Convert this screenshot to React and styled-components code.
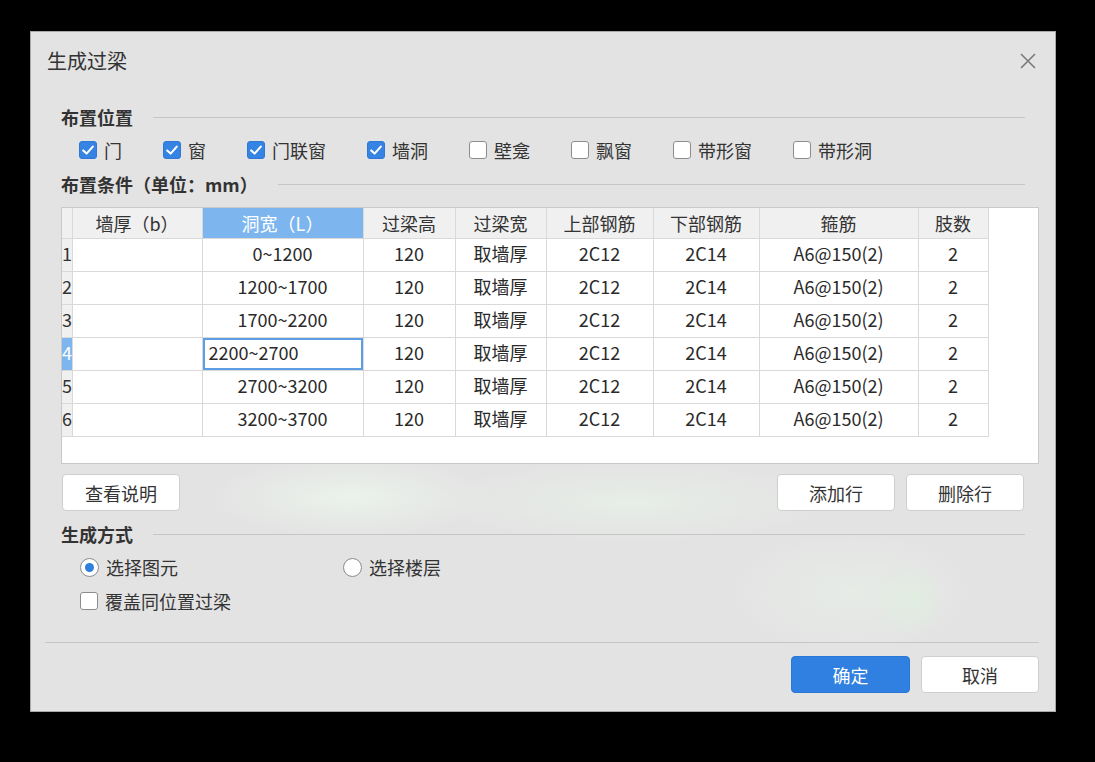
import React from 'react'
import styled, { createGlobalStyle, css } from 'styled-components'

const GlobalStyle = createGlobalStyle`
  html, body {
    margin: 0;
    padding: 0;
    background: #000;
  }
  body {
    font-family: "Noto Sans CJK SC", "Noto Sans", sans-serif;
    color: #333;
  }
  * { box-sizing: border-box; }
`

const positions = [
  { label: '门', checked: true },
  { label: '窗', checked: true },
  { label: '门联窗', checked: true },
  { label: '墙洞', checked: true },
  { label: '壁龛', checked: false },
  { label: '飘窗', checked: false },
  { label: '带形窗', checked: false },
  { label: '带形洞', checked: false },
]

const columns = [
  { title: '墙厚（b）', width: 130 },
  { title: '洞宽（L）', width: 161, selected: true },
  { title: '过梁高', width: 92 },
  { title: '过梁宽', width: 91 },
  { title: '上部钢筋', width: 107 },
  { title: '下部钢筋', width: 106 },
  { title: '箍筋', width: 159 },
  { title: '肢数', width: 70 },
]

const rows = [
  ['', '0~1200', '120', '取墙厚', '2C12', '2C14', 'A6@150(2)', '2'],
  ['', '1200~1700', '120', '取墙厚', '2C12', '2C14', 'A6@150(2)', '2'],
  ['', '1700~2200', '120', '取墙厚', '2C12', '2C14', 'A6@150(2)', '2'],
  ['', '2200~2700', '120', '取墙厚', '2C12', '2C14', 'A6@150(2)', '2'],
  ['', '2700~3200', '120', '取墙厚', '2C12', '2C14', 'A6@150(2)', '2'],
  ['', '3200~3700', '120', '取墙厚', '2C12', '2C14', 'A6@150(2)', '2'],
]

const editRow = 3
const editCol = 1

export default function App() {
  return (
    <>
      <GlobalStyle />
      <Dialog>
        <TitleBar>
          <span>生成过梁</span>
          <CloseIcon width="16" height="16" viewBox="0 0 16 16">
            <path d="M1 1 L15 15 M15 1 L1 15" stroke="#7a7a7a" strokeWidth="1.6" fill="none" />
          </CloseIcon>
        </TitleBar>

        <Content>
          <SectionHeader $top={15}>
            <span>布置位置</span>
            <Rule />
          </SectionHeader>
          <CheckRow>
            {positions.map((p) => (
              <Option key={p.label}>
                <CheckBox checked={p.checked} />
                {p.label}
              </Option>
            ))}
          </CheckRow>

          <SectionHeader $top={8}>
            <span>布置条件（单位：mm）</span>
            <Rule />
          </SectionHeader>

          <TableBox>
            <Grid>
              <colgroup>
                <col style={{ width: 10 }} />
                {columns.map((c) => (
                  <col key={c.title} style={{ width: c.width }} />
                ))}
              </colgroup>
              <thead>
                <tr>
                  <CornerCell />
                  {columns.map((c) => (
                    <HeadCell key={c.title} $selected={c.selected}>{c.title}</HeadCell>
                  ))}
                </tr>
              </thead>
              <tbody>
                {rows.map((r, i) => (
                  <tr key={i}>
                    <RowNum $selected={i === editRow}>{i + 1}</RowNum>
                    {r.map((v, j) => (
                      <Cell key={j} $editing={i === editRow && j === editCol}>{v}</Cell>
                    ))}
                  </tr>
                ))}
              </tbody>
            </Grid>
          </TableBox>

          <ButtonRow>
            <Button>查看说明</Button>
            <ButtonGroup>
              <Button>添加行</Button>
              <Button>删除行</Button>
            </ButtonGroup>
          </ButtonRow>

          <SectionHeader $top={10}>
            <span>生成方式</span>
            <Rule />
          </SectionHeader>
          <RadioRow>
            <Option>
              <Radio checked />
              选择图元
            </Option>
            <Option>
              <Radio />
              选择楼层
            </Option>
          </RadioRow>
          <SingleRow>
            <Option>
              <CheckBox />
              覆盖同位置过梁
            </Option>
          </SingleRow>
        </Content>

        <Footer>
          <Button $primary>确定</Button>
          <Button>取消</Button>
        </Footer>
      </Dialog>
    </>
  )
}

function CheckBox({ checked }) {
  return (
    <Box $checked={checked}>
      {checked && (
        <svg width="18" height="18" viewBox="0 0 18 18">
          <path d="M4.2 9.4 L7.6 12.6 L13.8 5.6" stroke="#fff" strokeWidth="2.1" fill="none" strokeLinecap="round" strokeLinejoin="round" />
        </svg>
      )}
    </Box>
  )
}

function Radio({ checked }) {
  return <RadioCircle $checked={checked} />
}

const Dialog = styled.div`
  margin: 31px 0 0 30px;
  width: 1026px;
  height: 681px;
  border: 1px solid #a8a8a8;
  background-color: #e3e3e3;
  background-image:
    radial-gradient(ellipse 140px 40px at 320px 465px, rgba(236, 244, 236, 0.9), transparent),
    radial-gradient(ellipse 200px 40px at 600px 470px, rgba(232, 240, 232, 0.8), transparent),
    radial-gradient(ellipse 35px 35px at 880px 568px, rgba(224, 240, 224, 0.8), transparent),
    radial-gradient(ellipse 120px 60px at 820px 560px, rgba(232, 238, 232, 0.8), transparent);
  display: flex;
  flex-direction: column;
`

const TitleBar = styled.div`
  height: 57px;
  padding: 0 19px 0 16px;
  display: flex;
  align-items: center;
  justify-content: space-between;
  font-size: 20px;
  color: #333;
`

const CloseIcon = styled.svg`
  display: block;
`

const Content = styled.div`
  padding: 0 16px 0 30px;
  display: flex;
  flex-direction: column;
`

const SectionHeader = styled.div`
  margin-top: ${(p) => p.$top}px;
  margin-right: 14px;
  height: 26px;
  display: flex;
  align-items: center;
  font-size: 18px;
  font-weight: bold;
  color: #333;
  white-space: nowrap;
`

const Rule = styled.div`
  flex: 1;
  height: 1px;
  margin-left: 20px;
  background: #c6c6c6;
`

const CheckRow = styled.div`
  margin-top: 7px;
  height: 26px;
  padding-left: 18px;
  display: flex;
  align-items: center;
  gap: 41px;
`

const Option = styled.label`
  display: flex;
  align-items: center;
  gap: 7px;
  font-size: 18px;
  color: #333;
  white-space: nowrap;
`

const Box = styled.span`
  width: 18px;
  height: 18px;
  border-radius: 3px;
  display: block;
  ${(p) =>
    p.$checked
      ? css`
          background: #3583e2;
          border: 1px solid #2f78d4;
        `
      : css`
          background: #fff;
          border: 1px solid #8c8c8c;
        `}
  svg {
    display: block;
    margin: -1px;
  }
`

const RadioCircle = styled.span`
  width: 19px;
  height: 19px;
  border-radius: 50%;
  background: #fff;
  border: 1px solid #8c8c8c;
  display: flex;
  align-items: center;
  justify-content: center;
  &::after {
    content: '';
    width: 9px;
    height: 9px;
    border-radius: 50%;
    background: ${(p) => (p.$checked ? '#2f7fe0' : 'transparent')};
  }
`

const TableBox = styled.div`
  margin-top: 10px;
  height: 257px;
  border: 1px solid #c9c9c9;
  background: #fff;
  overflow: hidden;
`

const Grid = styled.table`
  border-collapse: collapse;
  table-layout: fixed;
  width: 926px;
  font-size: 18px;
  color: #333;
  td, th {
    border: 1px solid #d9d9d9;
    padding: 0;
    white-space: nowrap;
    overflow: hidden;
  }
  tr:first-child th { border-top: none; }
  tr > *:first-child { border-left: none; }
`

const CornerCell = styled.th`
  background: #f0f0f0;
`

const HeadCell = styled.th`
  height: 30px;
  font-weight: normal;
  text-align: center;
  background: ${(p) => (p.$selected ? '#7db6ef' : '#f0f0f0')};
  color: ${(p) => (p.$selected ? '#fff' : '#333')};
`

const RowNum = styled.td`
  height: 33px;
  padding-bottom: 3px !important;
  text-align: left;
  background: ${(p) => (p.$selected ? '#7db6ef' : '#f0f0f0')};
  color: ${(p) => (p.$selected ? '#fff' : '#333')};
  font-size: 18px;
`

const Cell = styled.td`
  height: 33px;
  padding-bottom: 3px !important;
  text-align: center;
  color: #2a2a2a;
  ${(p) =>
    p.$editing &&
    css`
      text-align: left;
      padding-left: 6px !important;
      box-shadow: inset 0 0 0 2px #5c9de6;
    `}
`

const ButtonRow = styled.div`
  margin-top: 10px;
  margin-left: 1px;
  margin-right: 15px;
  display: flex;
  justify-content: space-between;
`

const ButtonGroup = styled.div`
  display: flex;
  gap: 11px;
`

const Button = styled.button`
  width: 118px;
  height: 37px;
  border-radius: 4px;
  font-family: inherit;
  font-size: 18px;
  cursor: pointer;
  ${(p) =>
    p.$primary
      ? css`
          background: #2f80e0;
          border: 1px solid #2a78d6;
          color: #fff;
          width: 119px;
        `
      : css`
          background: #fff;
          border: 1px solid #cfcfcf;
          color: #333;
        `}
`

const RadioRow = styled.div`
  margin-top: 7px;
  height: 26px;
  padding-left: 19px;
  display: flex;
  align-items: center;
  gap: 165px;
`

const SingleRow = styled.div`
  margin-top: 8px;
  height: 26px;
  padding-left: 19px;
  display: flex;
  align-items: center;
`

const Footer = styled.div`
  margin: 28px 16px 0 14px;
  padding-top: 13px;
  border-top: 1px solid #c6c6c6;
  display: flex;
  justify-content: flex-end;
  gap: 11px;
`
